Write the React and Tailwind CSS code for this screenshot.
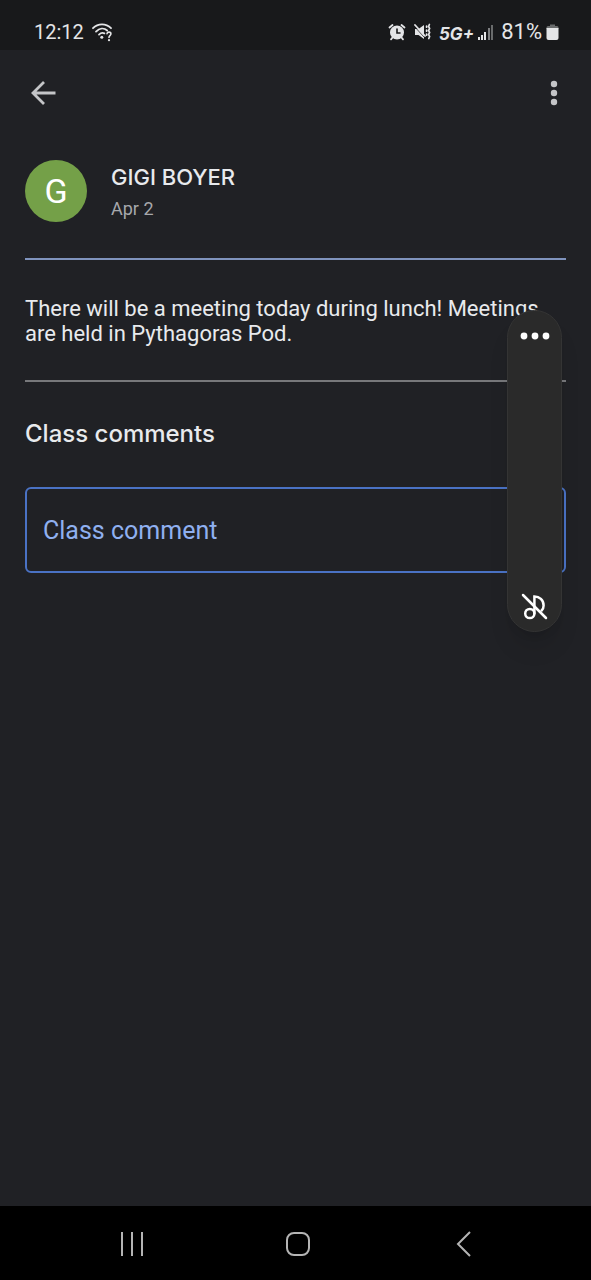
import React, { useState } from "react";

const StatusBar = () => (
  <div className="h-[50px] bg-[#18191b] flex items-center justify-between pl-[34px] pr-8 pt-[14px] text-[#e4e5e7]">
    <div className="flex items-center gap-2">
      <span className="text-xl leading-6">12:12</span>
      <svg width="21" height="20" viewBox="0 0 21 20" fill="none" stroke="currentColor" strokeWidth="1.8" strokeLinecap="round">
        <path d="M1 6.2C6 1 14 1 19 6.2" />
        <path d="M4 9.6C7.5 6 12 5.8 15.2 8.5" />
        <path d="M7 12.6C8.8 10.8 10.8 10.6 12.4 11.4" />
        <circle cx="9.8" cy="15.2" r="1.5" fill="currentColor" stroke="none" />
        <path d="M15 11.8c.2-2.4 4-2.2 3.9.2-.1 1.6-1.9 1.8-1.9 3.4" strokeWidth="1.6" />
        <circle cx="17" cy="18.2" r="1.1" fill="currentColor" stroke="none" />
      </svg>
    </div>

    <div className="flex items-center">
      {/* alarm */}
      <svg width="18" height="18" viewBox="0 0 18 18" fill="none" stroke="currentColor" strokeLinecap="round">
        <circle cx="9" cy="9.5" r="7" fill="currentColor" stroke="none" />
        <path d="M1.5 4.5L4.5 2M16.5 4.5L13.5 2M4.5 14.5L3 16.3M13.5 14.5L15 16.3" strokeWidth="1.8" />
        <path d="M9 6v4h3" stroke="#18191b" strokeWidth="1.6" />
      </svg>
      {/* vibrate */}
      <svg className="ml-2" width="17" height="18" viewBox="0 0 17 18" fill="none" stroke="currentColor" strokeLinecap="round">
        <path d="M1 6h3.5L10 2v14l-5.5-4H1z" fill="currentColor" stroke="none" />
        <path d="M0 3L10.5 14.5" stroke="#18191b" strokeWidth="0.8" />
        <path d="M1 2L11 13" strokeWidth="1.8" />
        <path d="M12.6 3v1.2M12.6 7v1.2M12.6 11v1.2M15.4 1.5l-.8 2 1 2-1 2 1 2-1 2 1 2-.8 2" strokeWidth="1.7" />
      </svg>
      <span className="ml-2 pt-1 font-[Inter,sans-serif] text-[17px] leading-5 font-bold italic">5G+</span>
      {/* signal */}
      <svg className="ml-1" width="16" height="17" viewBox="0 0 16 17" fill="currentColor">
        <rect x="0" y="13" width="2" height="3" />
        <rect x="3" y="11" width="2" height="5" />
        <rect x="6" y="8" width="2" height="8" />
        <rect x="10" y="4" width="2" height="12" opacity="0.5" />
        <rect x="13" y="1" width="2" height="15" opacity="0.4" />
      </svg>
      <span className="ml-[7px] text-[22px] leading-6">81%</span>
      {/* battery */}
      <svg className="ml-1" width="13" height="18" viewBox="0 0 13 18" fill="currentColor">
        <path d="M4 1.5h5V3h2q1.5 0 1.5 1.5V6H.5V4.5Q.5 3 2 3h2z" opacity="0.4" />
        <path d="M.5 5h12v10q0 2-2 2h-8q-2 0-2-2z" />
      </svg>
    </div>
  </div>
);

const VolumePanel = () => (
  <div className="absolute top-[310px] right-[29px] w-[55px] h-[322px] rounded-full bg-[#2a2a2a] border border-[#343434] shadow-xl flex flex-col items-center justify-between pt-5 pb-2 text-white">
    <button type="button" aria-label="More sound settings">
      <svg width="30" height="10" viewBox="0 0 30 10" fill="currentColor">
        <circle cx="4" cy="5" r="3.4" />
        <circle cx="15" cy="5" r="3.4" />
        <circle cx="26" cy="5" r="3.4" />
      </svg>
    </button>
    <button type="button" aria-label="Media muted">
      <svg width="30" height="32" viewBox="0 0 30 32" fill="none" stroke="currentColor" strokeWidth="2.5" strokeLinecap="round">
        <circle cx="9.8" cy="22.5" r="4.6" />
        <path d="M14.4 22.5V5.5c5 0 9.2 3.5 9.2 9 0 2-.7 3.8-2 5" />
        <path d="M3 4L26 27" />
      </svg>
    </button>
  </div>
);

const NavBar = () => (
  <nav className="h-[74px] bg-black flex items-center justify-between pl-[119px] pr-[115px] pt-0.5 text-[#b4b4b4]">
    <button type="button" aria-label="Recent apps">
      <svg width="26" height="26" viewBox="0 0 26 26" stroke="currentColor" strokeWidth="2">
        <path d="M3 1v24M13 1v24M23 1v24" />
      </svg>
    </button>
    <button type="button" aria-label="Home">
      <svg width="26" height="26" viewBox="0 0 26 26" fill="none" stroke="currentColor" strokeWidth="2">
        <rect x="2" y="2" width="22" height="22" rx="7" />
      </svg>
    </button>
    <button type="button" aria-label="Back">
      <svg width="26" height="26" viewBox="0 0 26 26" fill="none" stroke="currentColor" strokeWidth="2">
        <path d="M20 1L8 13l12 12" />
      </svg>
    </button>
  </nav>
);

const App = () => {
  const [comment, setComment] = useState("");

  return (
    <div className="relative min-h-screen flex flex-col bg-[#202125] font-[Roboto,sans-serif] text-[#e8eaed]">
      <StatusBar />

      <header className="h-[86px] flex items-center justify-between px-7 text-[#c4c5c8]">
        <button type="button" aria-label="Go back">
          <svg width="30" height="30" viewBox="0 0 30 30" fill="none" stroke="currentColor" strokeWidth="2.8">
            <path d="M27.5 15H5M16 4L5 15l11 11" />
          </svg>
        </button>
        <button type="button" aria-label="More options">
          <svg width="18" height="30" viewBox="0 0 18 30" fill="currentColor">
            <circle cx="9" cy="6" r="3.2" />
            <circle cx="9" cy="15" r="3.2" />
            <circle cx="9" cy="24" r="3.2" />
          </svg>
        </button>
      </header>

      <main className="flex-1 px-[25px] pt-6">
        <div className="flex items-start gap-6 pb-[34px] border-b-2 border-[#7f93bd]">
          <div className="size-[62px] rounded-full bg-[#74a048] flex items-center justify-center text-[34px] text-white">
            G
          </div>
          <div>
            <h1 className="font-[Inter,sans-serif] text-[22px] leading-[34px] font-medium">GIGI BOYER</h1>
            <p className="text-lg leading-[30px] text-[#a6a8ac]">Apr 2</p>
          </div>
        </div>

        <p className="pt-9 pb-[34px] text-[22px] leading-[25px] border-b-2 border-[#77787b]">
          There will be a meeting today during lunch! Meetings are held in Pythagoras Pod.
        </p>

        <h2 className="pt-9 pb-[37px] font-[Inter,sans-serif] text-2xl leading-8 font-medium">
          <label htmlFor="comment">Class comments</label>
        </h2>

        <input
          id="comment"
          type="text"
          placeholder="Class comment"
          value={comment}
          onChange={(e) => setComment(e.target.value)}
          className="block w-full h-[86px] px-4 text-[25px] bg-transparent border-2 border-[#4a72c4] rounded-md text-[#8fb0f0] placeholder:text-[#8fb0f0] outline-none"
        />
      </main>

      <NavBar />
      <VolumePanel />
    </div>
  );
};

export default App;
